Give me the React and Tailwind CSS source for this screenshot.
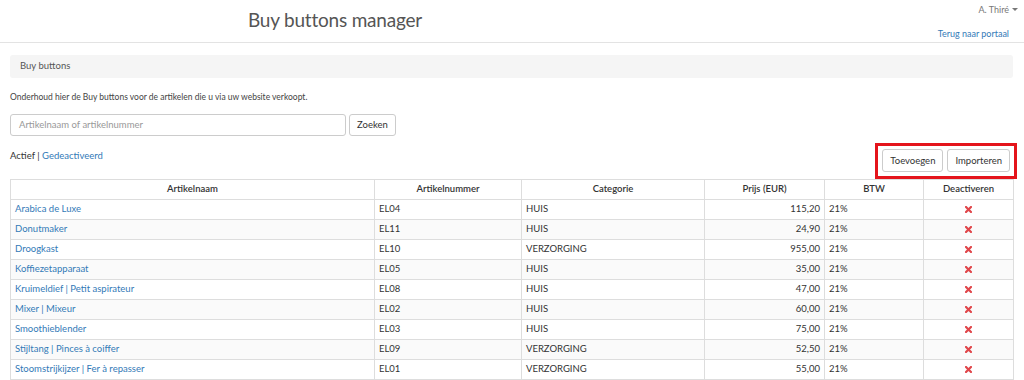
import React from "react";

const rows = [
  ["Arabica de Luxe", "EL04", "HUIS", "115,20"],
  ["Donutmaker", "EL11", "HUIS", "24,90"],
  ["Droogkast", "EL10", "VERZORGING", "955,00"],
  ["Koffiezetapparaat", "EL05", "HUIS", "35,00"],
  ["Kruimeldief | Petit aspirateur", "EL08", "HUIS", "47,00"],
  ["Mixer | Mixeur", "EL02", "HUIS", "60,00"],
  ["Smoothieblender", "EL03", "HUIS", "75,00"],
  ["Stijltang | Pinces à coiffer", "EL09", "VERZORGING", "52,50"],
  ["Stoomstrijkijzer | Fer à repasser", "EL01", "VERZORGING", "55,00"],
];

function XIcon() {
  return (
    <svg width="7" height="7" viewBox="0 0 7 7" className="inline-block">
      <path d="M1 1 L6 6 M6 1 L1 6" stroke="#e0464a" strokeWidth="2.2" strokeLinecap="square" />
    </svg>
  );
}

export default function App() {
  return (
    <div className="w-[1024px] h-[380px] overflow-hidden bg-white text-[#444] text-[9.5px]" style={{ fontFamily: "Lato, 'Open Sans', sans-serif" }}>
      <header className="h-[43px] border-b border-[#e3e3e3] flex">
        <div className="w-[670px] flex justify-center pt-[6px]">
          <h1 className="text-[19px] leading-[28px] text-[#555] tracking-[-0.2px]">Buy buttons manager</h1>
        </div>
        <div className="flex-1 flex flex-col items-end pr-[6px]">
          <div className="pt-[3px] text-[9px] text-[#777] flex items-center gap-[3px]">
            A. Thiré
            <svg width="6" height="4" viewBox="0 0 6 4"><path d="M0 0 L6 0 L3 3 Z" fill="#777" /></svg>
          </div>
          <a className="mt-[10px] mr-[9px] text-[9px] text-[#337ab7]">Terug naar portaal</a>
        </div>
      </header>

      <div className="px-[10px] pt-[12px]">
        <div className="h-[23px] bg-[#f5f5f5] rounded-[3px] flex items-center px-[10px] text-[#555] text-[9.5px] w-[1003px]">Buy buttons</div>

        <p className="mt-[13px] text-[8.5px] text-[#444]">Onderhoud hier de Buy buttons voor de artikelen die u via uw website verkoopt.</p>

        <div className="mt-[10px] flex gap-[3px]">
          <div className="w-[336px] h-[22px] border border-[#ccc] rounded-[3px] flex items-center px-[8px] text-[#999] text-[9.5px]">Artikelnaam of artikelnummer</div>
          <button className="w-[47px] h-[22px] border border-[#ccc] rounded-[3px] text-[9.5px] text-[#333] bg-white">Zoeken</button>
        </div>

        <div className="flex items-end justify-between mt-[7px] w-[1005px]">
          <div className="pb-[16px] text-[9.5px]">
            <span className="text-[#333]">Actief</span>
            <span className="text-[#333]"> | </span>
            <span className="text-[#337ab7]">Gedeactiveerd</span>
          </div>
          <div className="border-[3px] border-[#e4141b] pl-[4px] pr-[4px] py-[3.5px] flex gap-[4px] mr-[-2px]">
            <button className="h-[23px] px-[7px] border border-[#ccc] rounded-[3px] text-[9.5px] text-[#333] bg-white">Toevoegen</button>
            <button className="h-[23px] px-[7px] border border-[#ccc] rounded-[3px] text-[9.5px] text-[#333] bg-white">Importeren</button>
          </div>
        </div>

        <table className="w-[1003px] border-collapse text-[9.5px] table-fixed">
          <colgroup>
            <col className="w-[364px]" />
            <col className="w-[147px]" />
            <col className="w-[183px]" />
            <col className="w-[120px]" />
            <col className="w-[99px]" />
            <col className="w-[90px]" />
          </colgroup>
          <thead>
            <tr className="h-[20px]">
              {["Artikelnaam", "Artikelnummer", "Categorie", "Prijs (EUR)", "BTW", "Deactiveren"].map((h) => (
                <th key={h} className="border border-[#ddd] font-semibold text-[#333] text-center px-[4px]">{h}</th>
              ))}
            </tr>
          </thead>
          <tbody>
            {rows.map((r, i) => (
              <tr key={r[1]} className={"h-[20px] " + (i % 2 === 1 ? "bg-[#fafafa]" : "bg-white")}>
                <td className="border border-[#ddd] px-[4px] text-[#337ab7]">{r[0]}</td>
                <td className="border border-[#ddd] px-[4px] text-[#333]">{r[1]}</td>
                <td className="border border-[#ddd] px-[4px] text-[#333]">{r[2]}</td>
                <td className="border border-[#ddd] px-[4px] text-[#333] text-right">{r[3]}</td>
                <td className="border border-[#ddd] px-[4px] text-[#333]">21%</td>
                <td className="border border-[#ddd] px-[4px] text-center"><XIcon /></td>
              </tr>
            ))}
          </tbody>
        </table>
      </div>
    </div>
  );
}
